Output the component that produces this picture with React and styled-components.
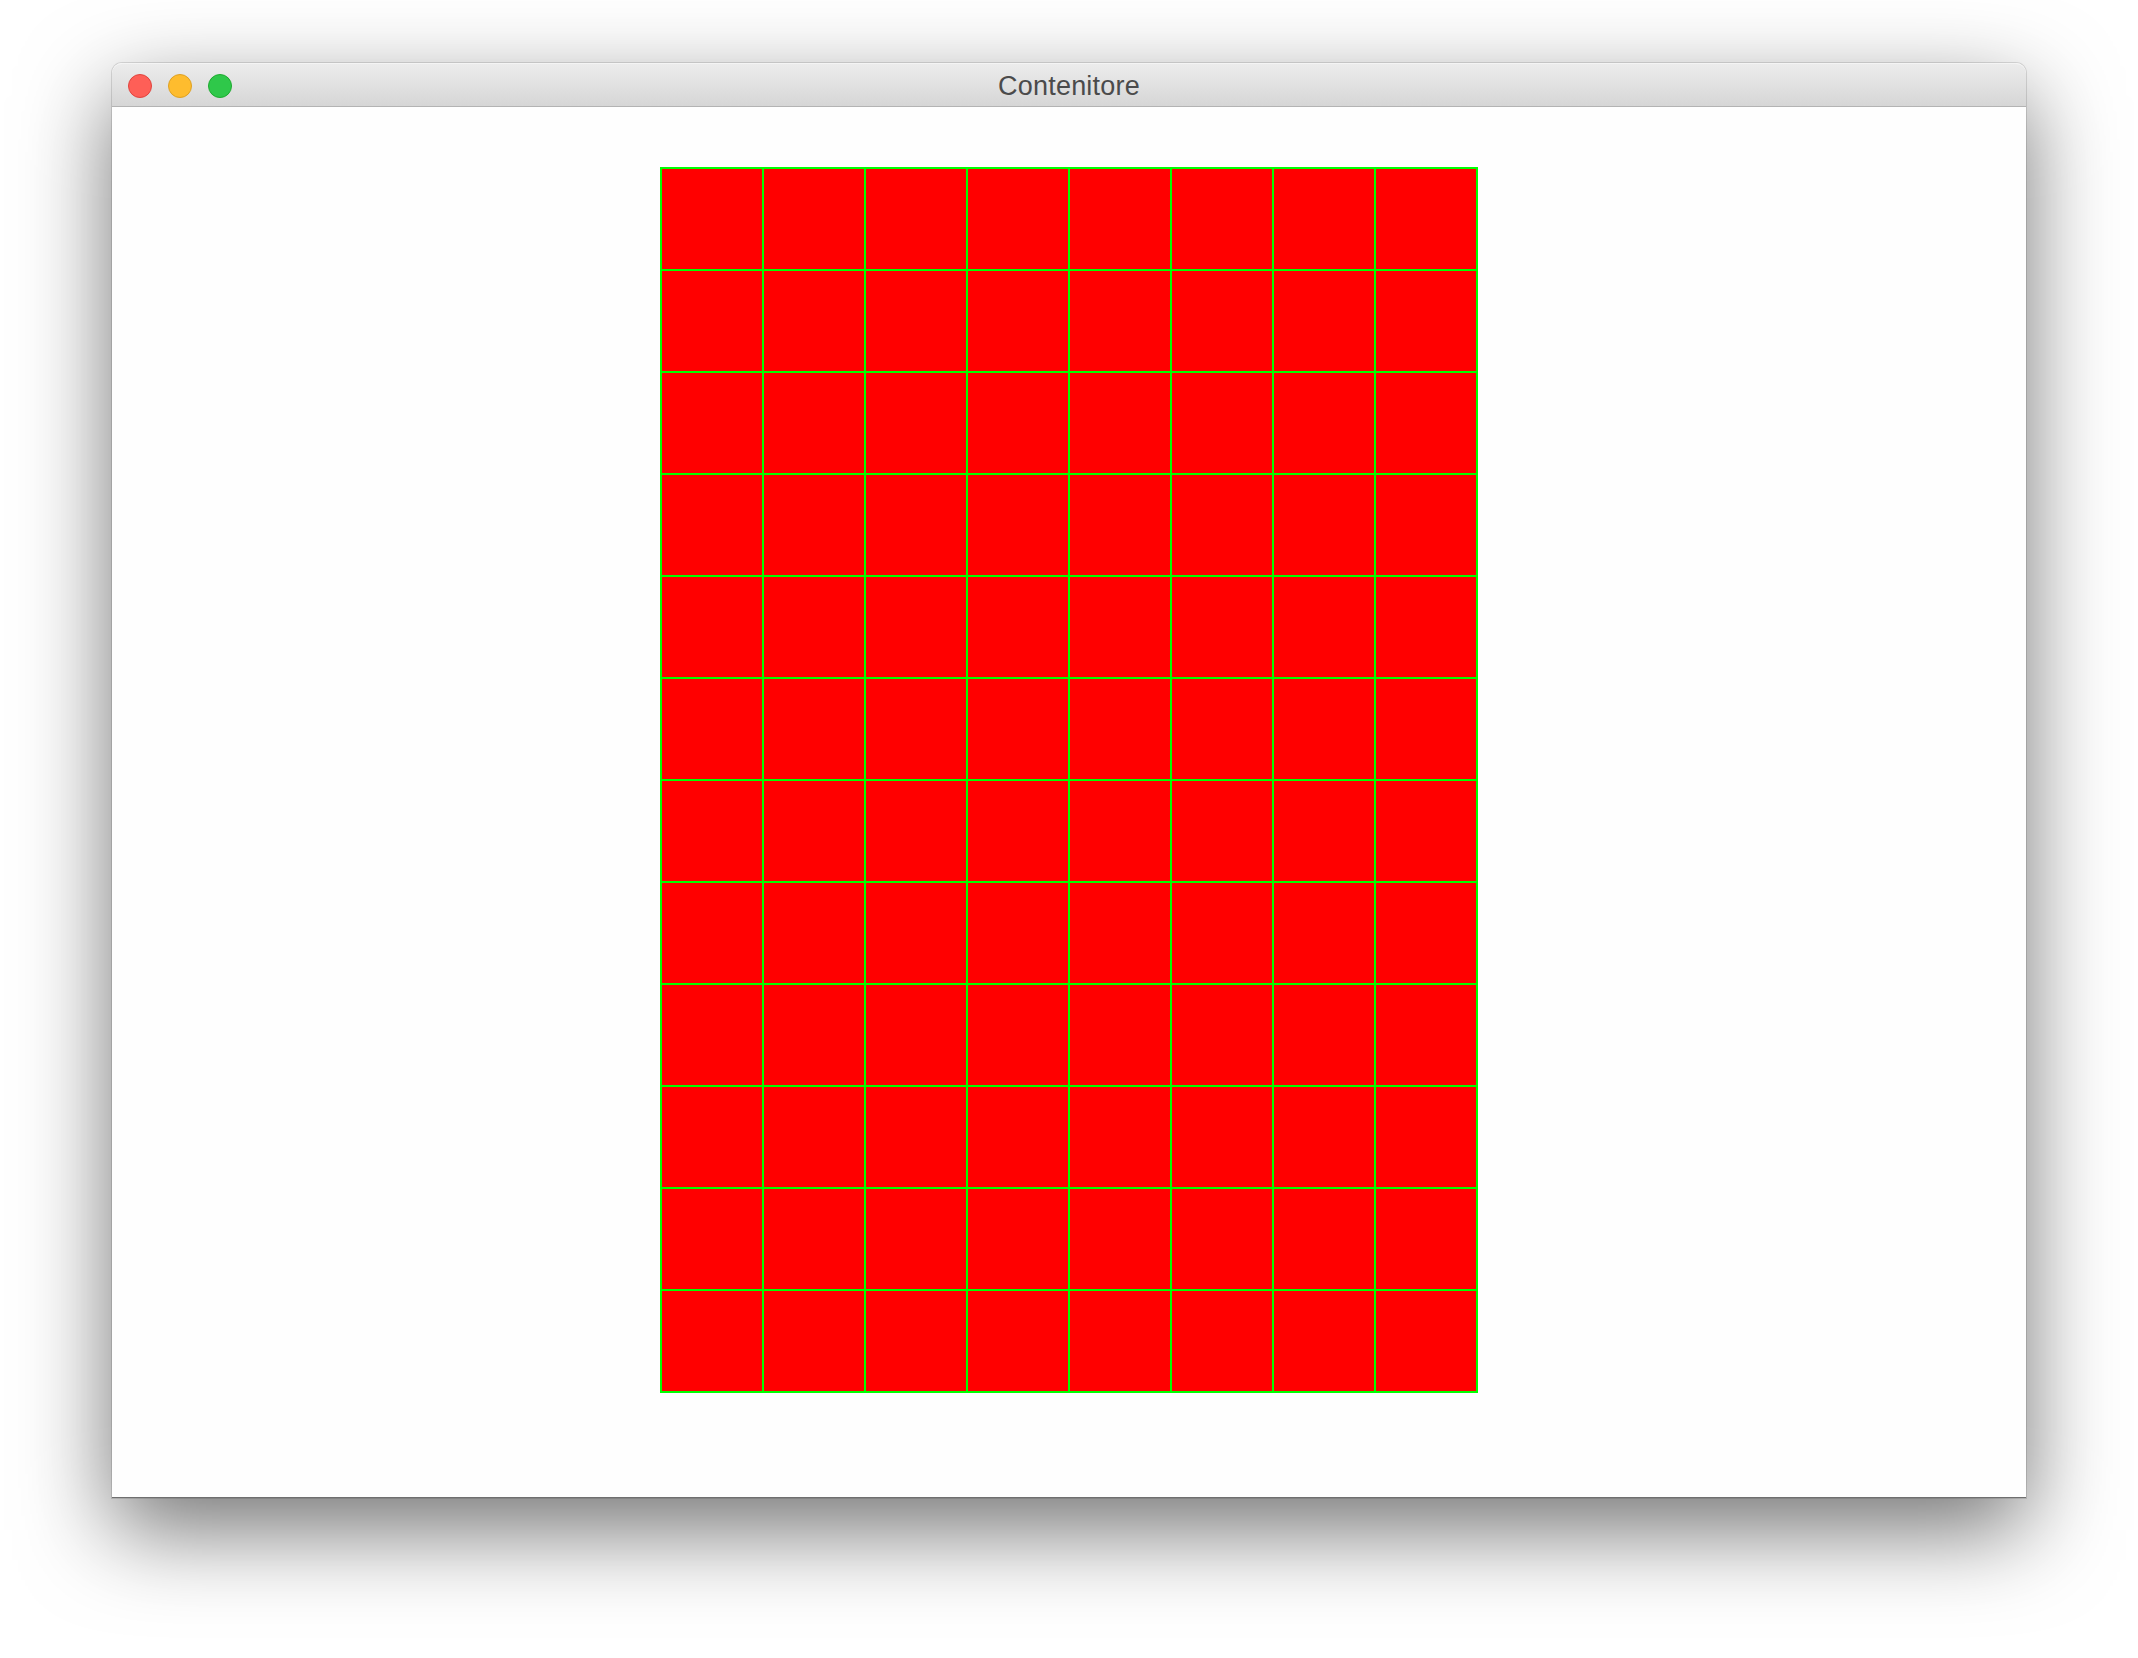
import React from 'react';
import styled, { createGlobalStyle } from 'styled-components';

const GlobalStyle = createGlobalStyle`
    html, body {
        margin: 0;
        padding: 0;
        background: #ffffff;
    }
    body {
        width: 2138px;
        height: 1658px;
        overflow: hidden;
        font-family: "Liberation Sans", Arial, sans-serif;
    }
`;

const Page = styled.div`
    padding: 63px 0 0 112px;
`;

const Window = styled.div`
    width: 1914px;
    height: 1435px;
    display: flex;
    flex-direction: column;
    background: #fefefe;
    border-radius: 10px 10px 0 0;
    box-shadow: 0 32px 90px rgba(0, 0, 0, 0.55), 0 0 0 1px rgba(0, 0, 0, 0.12);
    border-bottom: 1px solid #6f6f6f;
    box-sizing: border-box;
`;

const TitleBar = styled.div`
    position: relative;
    height: 44px;
    flex-shrink: 0;
    display: flex;
    align-items: center;
    justify-content: center;
    background: linear-gradient(#ececec, #d6d6d6);
    border-top: 1px solid #f4f4f4;
    border-bottom: 1px solid #b3b3b3;
    border-radius: 10px 10px 0 0;
    box-sizing: border-box;
`;

const Lights = styled.div`
    position: absolute;
    left: 16px;
    top: 10px;
    display: flex;
    gap: 16px;
`;

const Light = styled.span`
    width: 24px;
    height: 24px;
    border-radius: 50%;
    box-sizing: border-box;
    background: ${p => p.fill};
    border: 1px solid ${p => p.edge};
`;

const Title = styled.div`
    font-family: "Liberation Sans", Arial, sans-serif;
    font-size: 27px;
    color: #4b4b4b;
    letter-spacing: 0.2px;
    margin-top: 2px;
`;

const Content = styled.div`
    flex: 1;
    display: flex;
    justify-content: center;
    align-items: flex-start;
    padding-top: 60px;
`;

const Grid = styled.div`
    display: grid;
    grid-template-columns: repeat(8, 102px);
    grid-auto-rows: 102px;
    border: 1px solid #00ff00;
`;

const Cell = styled.div`
    background: #ff0000;
    border: 1px solid #00ff00;
`;

const cells = Array.from({ length: 8 * 12 }, (_, i) => i);

export default function App() {
    return (
        <Page>
            <GlobalStyle />
            <Window>
                <TitleBar>
                    <Lights>
                        <Light fill="#fe5f57" edge="#e0443e" />
                        <Light fill="#febc2e" edge="#dea123" />
                        <Light fill="#2fc84a" edge="#1dab2f" />
                    </Lights>
                    <Title>Contenitore</Title>
                </TitleBar>
                <Content>
                    <Grid>
                        {cells.map(i => <Cell key={i} />)}
                    </Grid>
                </Content>
            </Window>
        </Page>
    );
}
